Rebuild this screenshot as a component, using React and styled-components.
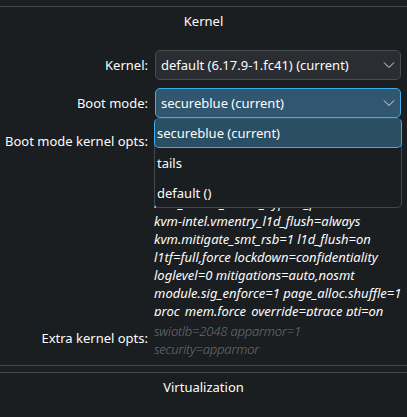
import styled, { createGlobalStyle } from "styled-components";

const Global = createGlobalStyle`
  html, body {
    margin: 0;
    padding: 0;
    background: #1b1e20;
  }
  body {
    font-family: "Noto Sans", sans-serif;
    font-size: 13px;
    color: #fcfcfc;
  }
`;

const Page = styled.div`
  width: 407px;
  height: 417px;
  overflow: hidden;
  padding-top: 6px;
  box-sizing: border-box;
`;

const Section = styled.section`
  border-top: 1px solid #45484b;
`;

const Title = styled.h2`
  margin: 0;
  height: 28px;
  line-height: 28px;
  font-size: 13px;
  font-weight: 400;
  text-align: center;
`;

const Form = styled.div`
  display: grid;
  grid-template-columns: 148px 246px;
  column-gap: 7px;
  row-gap: 8px;
  margin-top: 15px;
  height: 315px;
  align-content: start;
`;

const Label = styled.label`
  text-align: right;
  line-height: 30px;
`;

const Combo = styled.div`
  position: relative;
  display: flex;
  align-items: center;
  justify-content: space-between;
  height: 30px;
  box-sizing: border-box;
  padding: 0 5px;
  border: 1px solid ${(p) => (p.$open ? "#3daee9" : "#4a4d50")};
  border-radius: 5px;
  background: ${(p) => (p.$open ? "#31566f" : "#2a2e32")};
`;

const Chevron = () => (
  <svg width="12" height="8" viewBox="0 0 12 8" fill="none" stroke="#e0e1e2" strokeWidth="1">
    <path d="M1 1.5 6 6.5 11 1.5" />
  </svg>
);

const BootField = styled.div`
  position: relative;
`;

const Popup = styled.ul`
  position: absolute;
  z-index: 2;
  top: 30px;
  left: -1px;
  width: 248px;
  height: 90px;
  margin: 0;
  padding: 0;
  list-style: none;
  box-sizing: border-box;
  background: #1b1e20;
  border: 1px solid #45484b;
  border-radius: 5px;
`;

const Option = styled.li`
  height: 30px;
  line-height: 30px;
  padding-left: 2px;
  box-sizing: border-box;
`;

const ActiveOption = styled(Option)`
  margin: -1px -1px 0;
  line-height: 28px;
  background: #2a4e63;
  border: 1px solid #3daee9;
  border-top-color: #2f5a73;
  border-radius: 5px;
`;

const OptsLabel = styled(Label)`
  line-height: 18px;
  padding-top: 6px;
`;

const Opts = styled.div`
  height: 190px;
  overflow: hidden;
  padding-top: 14px;
  box-sizing: border-box;
  margin-left: -1px;
  font-style: italic;
  line-height: 18px;
  white-space: pre;
`;

const ExtraLabel = styled(Label)`
  margin-top: -2px;
  line-height: 33px;
`;

const Placeholder = styled.div`
  margin-top: -2px;
  margin-left: -1px;
  font-style: italic;
  font-weight: 300;
  letter-spacing: -0.2px;
  line-height: 18px;
  white-space: pre;
  color: #6a6d70;
`;

const Rule = styled.div`
  border-top: 1px solid #45484b;
  margin-top: ${(p) => p.$gap}px;
`;

const optLines = [
  "init_on_alloc=1 init_on_free=1",
  "ia32_emulation=0 iommu=force",
  "amd_iommu=force_isolation",
  "mds_nosmt_rstack_bypass_p",
  "kvm-intel.vmentry_l1d_flush=always",
  "kvm.mitigate_smt_rsb=1 l1d_flush=on",
  "l1tf=full,force lockdown=confidentiality",
  "loglevel=0 mitigations=auto,nosmt",
  "module.sig_enforce=1 page_alloc.shuffle=1",
  "proc_mem.force_override=ptrace pti=on",
];

export default function App() {
  return (
    <Page>
      <Global />
      <Section>
        <Title>Kernel</Title>
        <Form>
          <Label>Kernel:</Label>
          <Combo>
            default (6.17.9-1.fc41) (current)
            <Chevron />
          </Combo>
          <Label>Boot mode:</Label>
          <BootField>
            <Combo $open>
              secureblue (current)
              <Chevron />
            </Combo>
            <Popup>
              <ActiveOption>secureblue (current)</ActiveOption>
              <Option>tails</Option>
              <Option>default ()</Option>
            </Popup>
          </BootField>
          <OptsLabel>Boot mode kernel opts:</OptsLabel>
          <Opts>{optLines.join("\n")}</Opts>
          <ExtraLabel>Extra kernel opts:</ExtraLabel>
          <Placeholder>{"swiotlb=2048 apparmor=1\nsecurity=apparmor"}</Placeholder>
        </Form>
        <Rule $gap={0} />
        <Rule $gap={6} />
        <Title>Virtualization</Title>
      </Section>
    </Page>
  );
}
